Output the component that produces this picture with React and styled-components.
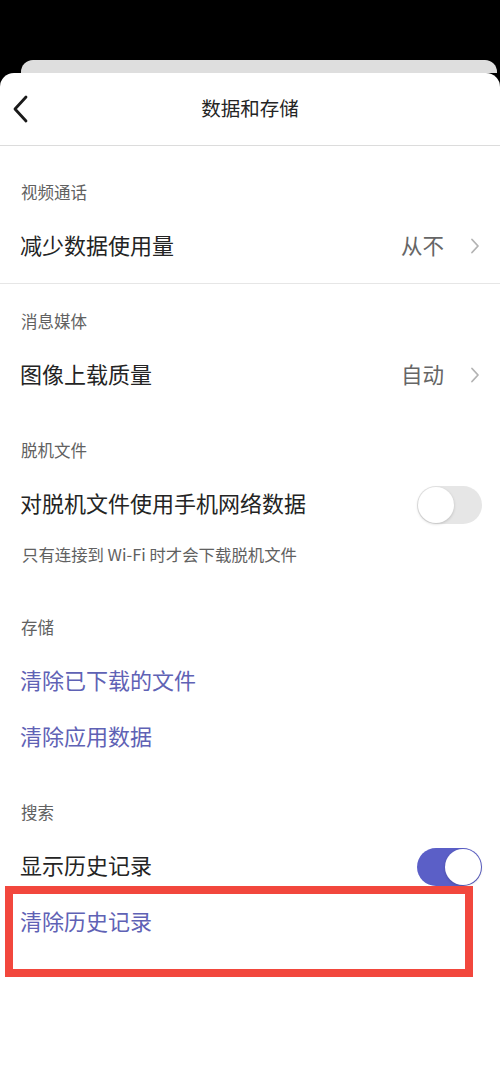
import React from "react";
import styled, { createGlobalStyle } from "styled-components";

const Global = createGlobalStyle`
  html, body {
    margin: 0;
    padding: 0;
    background: #000;
  }
  body {
    font-family: "Noto Sans CJK SC", "Noto Sans", sans-serif;
    -webkit-font-smoothing: antialiased;
  }
`;

const Page = styled.div`
  min-height: 1083px;
  display: flex;
  flex-direction: column;
  padding-top: 60px;
  box-sizing: border-box;
`;

const BackCard = styled.div`
  height: 13px;
  margin: 0 3px 0 21px;
  background: #dedede;
  border-radius: 12px 12px 0 0;
`;

const Sheet = styled.div`
  flex: 1;
  background: #fff;
  border-radius: 14px 14px 0 0;
  display: flex;
  flex-direction: column;
`;

const Header = styled.div`
  position: relative;
  height: 72px;
  display: flex;
  align-items: center;
  justify-content: center;
  border-bottom: 1px solid #dcdcdc;
`;

const BackButton = styled.button`
  position: absolute;
  left: 6px;
  top: 20px;
  width: 28px;
  height: 32px;
  padding: 0;
  border: none;
  background: transparent;
  display: flex;
  align-items: center;
  justify-content: center;
`;

const Title = styled.div`
  font-size: 19.5px;
  color: #242424;
  padding-bottom: 3px;
`;

const Content = styled.div`
  padding-top: 9px;
`;

const Section = styled.div`
  padding: 16px 0 8px;
  border-bottom: 1px solid ${(p) => (p.$divider ? "#e6e6e6" : "transparent")};
`;

const Label = styled.div`
  height: 48px;
  box-sizing: border-box;
  padding: 0 21px 6px;
  display: flex;
  align-items: center;
  font-size: 16.5px;
  color: #616161;
`;

const Row = styled.div`
  position: relative;
  height: 56px;
  display: flex;
  align-items: center;
  padding: 0 20px;
  gap: 12px;
`;

const RowText = styled.div`
  flex: 1;
  padding-bottom: 6px;
  font-size: 22px;
  color: ${(p) => (p.$link ? "#5f62b5" : "#242424")};
`;

const Value = styled.div`
  font-size: 21.5px;
  padding-bottom: 6px;
  color: #666;
  margin-right: 14px;
`;

const ChevronBox = styled.div`
  display: flex;
  padding-bottom: 2px;
`;

const Hint = styled.div`
  height: 48px;
  box-sizing: border-box;
  padding: 0 22px 6px;
  display: flex;
  align-items: center;
  font-size: 16.4px;
  color: #616161;
`;

const Track = styled.div`
  width: 65px;
  height: 38px;
  margin-right: -2px;
  border-radius: 19px;
  box-sizing: border-box;
  background: ${(p) => (p.$on ? "#5b5fc7" : "#e6e6e6")};
  display: flex;
  align-items: center;
  justify-content: ${(p) => (p.$on ? "flex-end" : "flex-start")};
  padding: 1px;
`;

const Knob = styled.div`
  width: 36px;
  height: 36px;
  border-radius: 50%;
  background: #fff;
  box-shadow: 0 1px 3px rgba(0, 0, 0, 0.18);
`;

const Highlight = styled.div`
  position: absolute;
  left: 5px;
  top: -9px;
  width: 468px;
  height: 91px;
  box-sizing: border-box;
  border: 8px solid #f2473d;
  pointer-events: none;
`;

const Chevron = () => (
  <ChevronBox>
    <svg width="10" height="16" viewBox="0 0 10 16">
      <path d="M2 1.5 L8 8 L2 14.5" fill="none" stroke="#b3b3b3" strokeWidth="1.8" strokeLinecap="round" strokeLinejoin="round" />
    </svg>
  </ChevronBox>
);

const Toggle = ({ on }) => (
  <Track $on={on}>
    <Knob />
  </Track>
);

export default function App() {
  return (
    <>
      <Global />
      <Page>
        <BackCard />
        <Sheet>
          <Header>
            <BackButton>
              <svg width="18" height="28" viewBox="0 0 18 28">
                <path d="M15 2 L4 14 L15 26" fill="none" stroke="#1a1a1a" strokeWidth="2.8" strokeLinecap="round" strokeLinejoin="round" />
              </svg>
            </BackButton>
            <Title>数据和存储</Title>
          </Header>
          <Content>
            <Section $divider>
              <Label>视频通话</Label>
              <Row>
                <RowText>减少数据使用量</RowText>
                <Value>从不</Value>
                <Chevron />
              </Row>
            </Section>
            <Section>
              <Label>消息媒体</Label>
              <Row>
                <RowText>图像上载质量</RowText>
                <Value>自动</Value>
                <Chevron />
              </Row>
            </Section>
            <Section>
              <Label>脱机文件</Label>
              <Row>
                <RowText>对脱机文件使用手机网络数据</RowText>
                <Toggle on={false} />
              </Row>
              <Hint>只有连接到 Wi-Fi 时才会下载脱机文件</Hint>
            </Section>
            <Section>
              <Label>存储</Label>
              <Row>
                <RowText $link>清除已下载的文件</RowText>
              </Row>
              <Row>
                <RowText $link>清除应用数据</RowText>
              </Row>
            </Section>
            <Section>
              <Label>搜索</Label>
              <Row>
                <RowText>显示历史记录</RowText>
                <Toggle on />
              </Row>
              <Row>
                <RowText $link>清除历史记录</RowText>
                <Highlight />
              </Row>
            </Section>
          </Content>
        </Sheet>
      </Page>
    </>
  );
}
